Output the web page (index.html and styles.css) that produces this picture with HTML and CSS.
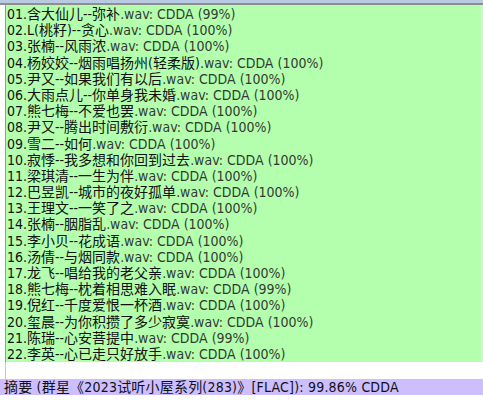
FILE: index.html
```html
<!DOCTYPE html>
<html>
<head>
<meta charset="utf-8">
<link rel="stylesheet" href="styles.css">
</head>
<body>
<div class="topbar"></div>
<div class="panel">
  <div class="row">01.含大仙儿--弥补<span class="ext">.wav: CDDA (99%)</span></div>
  <div class="row">02.L(桃籽)--贪心<span class="ext">.wav: CDDA (100%)</span></div>
  <div class="row">03.张楠--风雨浓<span class="ext">.wav: CDDA (100%)</span></div>
  <div class="row">04.杨姣姣--烟雨唱扬州(轻柔版)<span class="ext">.wav: CDDA (100%)</span></div>
  <div class="row">05.尹又--如果我们有以后<span class="ext">.wav: CDDA (100%)</span></div>
  <div class="row">06.大雨点儿--你单身我未婚<span class="ext">.wav: CDDA (100%)</span></div>
  <div class="row">07.熊七梅--不爱也罢<span class="ext">.wav: CDDA (100%)</span></div>
  <div class="row">08.尹又--腾出时间敷衍<span class="ext">.wav: CDDA (100%)</span></div>
  <div class="row">09.雪二--如何<span class="ext">.wav: CDDA (100%)</span></div>
  <div class="row">10.寂悸--我多想和你回到过去<span class="ext">.wav: CDDA (100%)</span></div>
  <div class="row">11.梁琪清--一生为伴<span class="ext">.wav: CDDA (100%)</span></div>
  <div class="row">12.巴昱凯--城市的夜好孤单<span class="ext">.wav: CDDA (100%)</span></div>
  <div class="row">13.王理文--一笑了之<span class="ext">.wav: CDDA (100%)</span></div>
  <div class="row">14.张楠--胭脂乱<span class="ext">.wav: CDDA (100%)</span></div>
  <div class="row">15.李小贝--花成语<span class="ext">.wav: CDDA (100%)</span></div>
  <div class="row">16.汤倩--与烟同款<span class="ext">.wav: CDDA (100%)</span></div>
  <div class="row">17.龙飞--唱给我的老父亲<span class="ext">.wav: CDDA (100%)</span></div>
  <div class="row">18.熊七梅--枕着相思难入眠<span class="ext">.wav: CDDA (99%)</span></div>
  <div class="row">19.倪红--千度爱恨一杯酒<span class="ext">.wav: CDDA (100%)</span></div>
  <div class="row">20.玺晨--为你积攒了多少寂寞<span class="ext">.wav: CDDA (100%)</span></div>
  <div class="row">21.陈瑞--心安菩提中<span class="ext">.wav: CDDA (99%)</span></div>
  <div class="row">22.李英--心已走只好放手<span class="ext">.wav: CDDA (100%)</span></div>
</div>
<div class="gap"></div>
<div class="summary">摘要 (群星《2023试听小屋系列(283)》[FLAC]): 99.86% CDDA</div>
</body>
</html>
```

FILE: styles.css
```css
html, body {
  margin: 0;
  padding: 0;
  background: #ffffff;
}
body {
  width: 483px;
  height: 400px;
  overflow: hidden;
  font-family: "DejaVu Sans Condensed", "DejaVu Sans", "Noto Sans CJK SC", sans-serif;
  font-size: 14px;
  color: #000;
}
.topbar {
  height: 3px;
  background: #b8cbe2;
  border-bottom: 2px solid #8e8e8e;
}
.panel {
  margin-left: 5px;
  border-left: 1px solid #9a9a8a;
  border-right: 2px solid #c4ffc0;
  background: #b3ffae;
  height: 357px;
  padding-left: 1px;
  box-sizing: border-box;
  padding-top: 1px;
}
.row {
  height: 16.2px;
  line-height: 16.2px;
  white-space: nowrap;
  color: #111;
}
.ext {
  color: #333a33;
}
.gap {
  height: 17px;
  margin-left: 5px;
  border-left: 1px solid #c8c8c8;
}
.summary {
  background: #ccbeff;
  height: 16px;
  line-height: 16px;
  padding-left: 4px;
  white-space: nowrap;
  color: #111;
  letter-spacing: 0.2px;
}
```
